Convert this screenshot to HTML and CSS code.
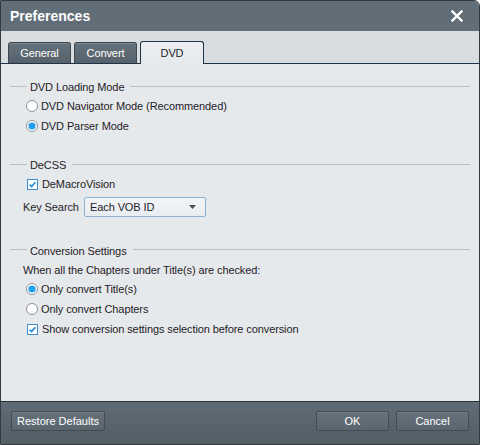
FILE: index.html
```html
<!DOCTYPE html>
<html>
<head>
<meta charset="utf-8">
<link rel="stylesheet" href="styles.css">
</head>
<body>
<div class="window">
  <div class="titlebar">
    <span class="title">Preferences</span>
    <svg class="close" width="12" height="12" viewBox="0 0 12 12"><path d="M1.5 1.5 L10.5 10.5 M10.5 1.5 L1.5 10.5" stroke="#fff" stroke-width="2.4" stroke-linecap="square"/></svg>
  </div>
  <div class="tabstrip">
    <div class="tab">General</div>
    <div class="tab">Convert</div>
    <div class="tab active">DVD</div>
  </div>
  <div class="content">
    <div class="group-head"><span>DVD Loading Mode</span></div>
    <div class="row opt">
      <svg class="radio" width="12" height="12" viewBox="0 0 12 12"><circle cx="6" cy="6" r="5.5" fill="#fff" stroke="#8d9297"/></svg>
      <span>DVD Navigator Mode (Recommended)</span>
    </div>
    <div class="row opt">
      <svg class="radio" width="12" height="12" viewBox="0 0 12 12"><circle cx="6" cy="6" r="5.5" fill="#fff" stroke="#8d9297"/><circle cx="6" cy="6" r="3.6" fill="#1e9ff2"/></svg>
      <span>DVD Parser Mode</span>
    </div>

    <div class="group-head gap"><span>DeCSS</span></div>
    <div class="row opt">
      <svg class="check" width="11" height="11" viewBox="0 0 11 11"><rect x="0.5" y="0.5" width="10" height="10" fill="#fff" stroke="#3f8fd0"/><path d="M2.6 5.6 L4.6 7.6 L8.4 3.2" fill="none" stroke="#1a8ee6" stroke-width="1.6"/></svg>
      <span>DeMacroVision</span>
    </div>
    <div class="row keyrow">
      <span class="label">Key Search</span>
      <div class="select">
        <span>Each VOB ID</span>
        <svg width="8" height="4" viewBox="0 0 8 4"><path d="M0 0 H7 L3.5 4 Z" fill="#4a4f54"/></svg>
      </div>
    </div>

    <div class="group-head gap2"><span>Conversion Settings</span></div>
    <div class="row note">When all the Chapters under Title(s) are checked:</div>
    <div class="row opt">
      <svg class="radio" width="12" height="12" viewBox="0 0 12 12"><circle cx="6" cy="6" r="5.5" fill="#fff" stroke="#8d9297"/><circle cx="6" cy="6" r="3.6" fill="#1e9ff2"/></svg>
      <span>Only convert Title(s)</span>
    </div>
    <div class="row opt">
      <svg class="radio" width="12" height="12" viewBox="0 0 12 12"><circle cx="6" cy="6" r="5.5" fill="#fff" stroke="#8d9297"/></svg>
      <span>Only convert Chapters</span>
    </div>
    <div class="row opt">
      <svg class="check" width="11" height="11" viewBox="0 0 11 11"><rect x="0.5" y="0.5" width="10" height="10" fill="#fff" stroke="#3f8fd0"/><path d="M2.6 5.6 L4.6 7.6 L8.4 3.2" fill="none" stroke="#1a8ee6" stroke-width="1.6"/></svg>
      <span>Show conversion settings selection before conversion</span>
    </div>
  </div>
  <div class="footer">
    <div class="btn restore">Restore Defaults</div>
    <div class="spacer"></div>
    <div class="btn ok">OK</div>
    <div class="btn cancel">Cancel</div>
  </div>
</div>
</body>
</html>
```

FILE: styles.css
```css
* { box-sizing: border-box; }
html, body { margin: 0; padding: 0; background: #fff; }
body {
  font-family: "Liberation Sans", Arial, sans-serif;
  font-size: 11px;
  color: #1e2226;
}
.window {
  width: 480px;
  height: 445px;
  border: 1px solid #343a40;
  border-top-right-radius: 6px;
  overflow: hidden;
  display: flex;
  flex-direction: column;
  background: #e6e9ec;
}
.titlebar {
  height: 30px;
  background: #616e78;
  display: flex;
  align-items: center;
  padding: 0 16px 0 9px;
  flex: none;
}
.title {
  color: #fff;
  font-weight: bold;
  font-size: 14px;
  flex: 1;
  margin-top: -1px;
}
.close { display: block; margin-top: -1px; }
.tabstrip {
  height: 33px;
  flex: none;
  background: #d9dde0;
  border-bottom: 1px solid #1f3447;
  display: flex;
  align-items: flex-end;
  padding-left: 7px;
  gap: 3px;
}
.tab {
  width: 63px;
  height: 21px;
  background: linear-gradient(#66727b, #56626b);
  border: 1px solid #3e474e;
  border-bottom: none;
  border-radius: 3px 3px 0 0;
  box-shadow: inset 0 1px 0 #7c8891;
  color: #fff;
  text-align: center;
  line-height: 20px;
  letter-spacing: -0.1px;
}
.tab.active {
  width: 64px;
  height: 23px;
  margin-bottom: -1px;
  background: linear-gradient(#eceef1, #e6e9ec);
  border: 1px solid #1f3447;
  border-bottom: none;
  box-shadow: none;
  color: #1e2226;
  line-height: 22px;
}
.content {
  flex: 1;
  padding: 14px 9px 0 9px;
}
.row {
  display: flex;
  align-items: center;
  height: 20px;
  letter-spacing: -0.1px;
}
.opt { padding-left: 16px; }
.opt svg { display: block; flex: none; }
.opt .radio { margin-right: 3px; }
.opt .check { margin-right: 4px; margin-left: 1px; }
.group-head {
  display: flex;
  align-items: center;
  height: 18px;
  letter-spacing: -0.1px;
}
.group-head::before {
  content: "";
  width: 17px;
  height: 1px;
  background: #b9bec3;
  margin-right: 3px;
  margin-top: -2px;
}
.group-head::after {
  content: "";
  flex: 1;
  height: 1px;
  background: #b9bec3;
  margin-left: 6px;
  margin-top: -2px;
}
.group-head.gap { margin-top: 20px; }
.group-head.gap2 { margin-top: 21px; height: 19px; }
.keyrow {
  height: 26px;
  padding-left: 13px;
}
.label { width: 61px; }
.select {
  width: 122px;
  height: 20px;
  border: 1px solid #8eb2d2;
  border-radius: 2px;
  background: linear-gradient(#f2f5f8, #e8edf2);
  display: flex;
  align-items: center;
  justify-content: space-between;
  padding: 0 8px 0 5px;
}
.select svg { display: block; }
.note { padding-left: 13px; height: 19px; }
.footer {
  height: 43px;
  flex: none;
  background: linear-gradient(#5f6b75, #535e67);
  border-top: 1px solid #2b3237;
  display: flex;
  align-items: flex-start;
  padding: 9px 10px 0 10px;
}
.spacer { flex: 1; }
.btn {
  height: 20px;
  border: 1px solid #424b52;
  border-radius: 2px;
  background: linear-gradient(#66727b, #5a656e);
  box-shadow: inset 0 1px 0 #74808a;
  color: #fff;
  text-align: center;
  line-height: 18px;
}
.restore { width: 94px; }
.ok { width: 73px; margin-right: 7px; }
.cancel { width: 73px; }
```
